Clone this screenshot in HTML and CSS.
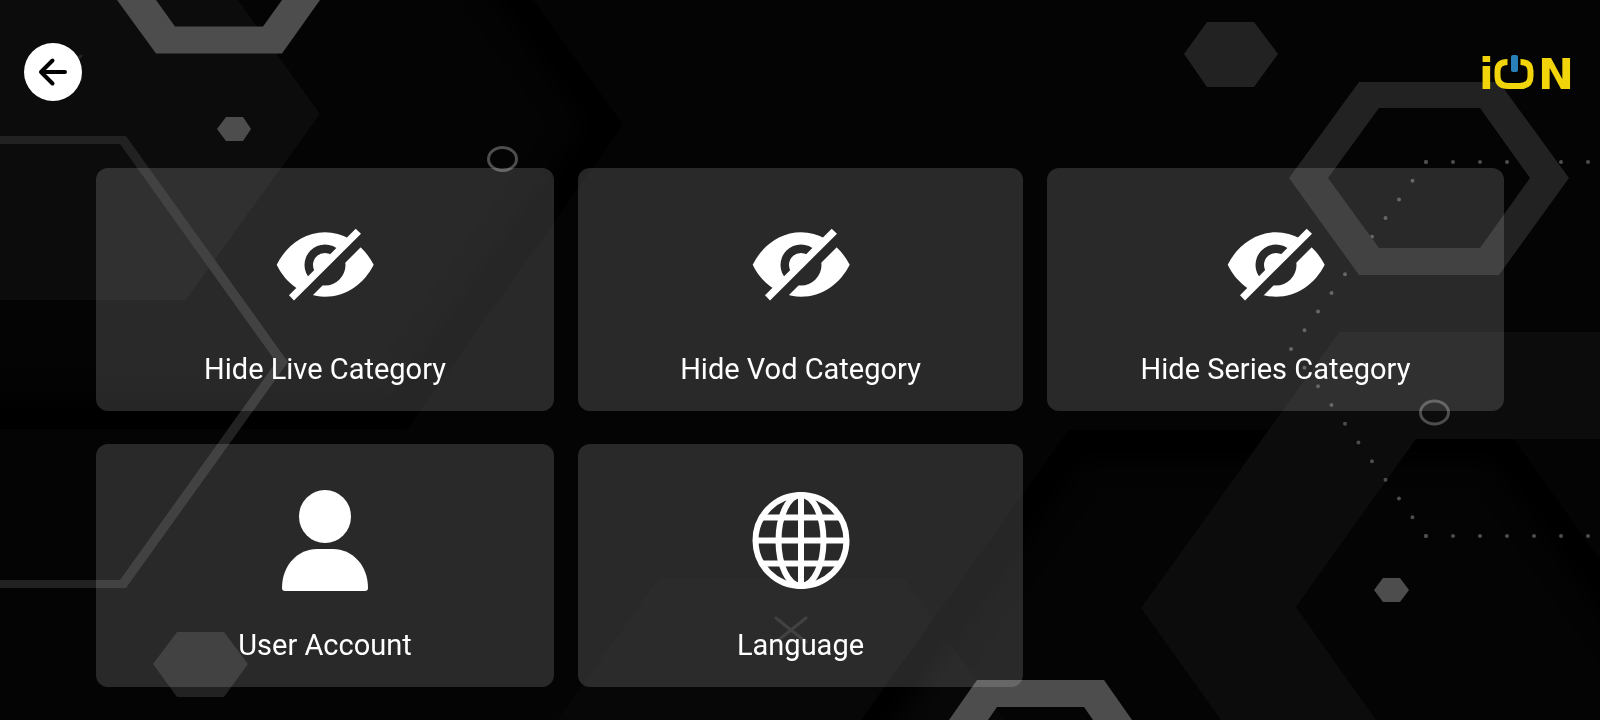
FILE: index.html
```html
<!DOCTYPE html>
<html lang="en">
<head>
    <meta charset="UTF-8">
    <meta name="viewport" content="width=device-width, initial-scale=1.0">
    <title>iON - Settings</title>
    <link rel="stylesheet" href="styles.css">
</head>
<body>
    <!-- Background -->
    <svg class="background" viewBox="0 0 1600 720" preserveAspectRatio="none" aria-hidden="true">
        <defs>
            <filter id="soft" x="-20%" y="-20%" width="140%" height="140%">
                <feGaussianBlur stdDeviation="12"/>
            </filter>
            <clipPath id="shade-left"><path d="M-60 -60H490L623 125L407 429H-60z"/></clipPath>
            <clipPath id="shade-right"><path d="M1069 430H1507L1720 728L1640 840H775z"/></clipPath>
        </defs>
        <path fill="#070707" d="M659 578H904L1005 720H557z"/>
        <g clip-path="url(#shade-left)">
            <path class="shade" d="M-60 -60H490L623 125L407 429H-60"/>
        </g>
        <g clip-path="url(#shade-right)">
            <path class="shade" d="M775 840L1069 430H1507L1720 728"/>
        </g>
        <path fill="#0c0c0c" d="M0 0H238L320 114L186 300H0z"/>
        <path fill="#0c0c0c" d="M1339 332H1600V439H1416L1296 607L1376 720H1221L1141 608z"/>
        <path class="dots-row" d="M1426 162H1600M1426 536H1600"/>
        <path class="dots-side" d="M1426 162L1291 349L1426 536"/>
        <g fill="#222" fill-rule="evenodd">
            <path d="M0 136H126L288 362L126 588H0V580H120L276 362L120 144H0z"/>
            <path d="M1184 54L1207 22H1254L1278 54L1254 87H1207z"/>
            <path d="M1289 178L1359 82H1499L1569 178L1499 275H1359zM1328 178L1379 248H1480L1530 178L1480 108H1379z"/>
            <path d="M153 664L177 632H224L248 664L224 697H177z"/>
        </g>
        <g fill="#4d4d4d">
            <path d="M117 0L156 53.500H282L320 0H282L263 26.500H175L156 0z"/>
            <path d="M217 129L226 117H243L251 129L243 141H226z"/>
            <path d="M1374 590L1383 578H1400L1409 590L1400 602H1383z"/>
            <path d="M949 720L977 680H1104L1132 720H1093L1084 707H997L988 720z"/>
        </g>
        <g fill="none" stroke="#4d4d4d" stroke-width="3">
            <ellipse cx="502.500" cy="159" rx="14" ry="11.500"/>
            <ellipse cx="1434.500" cy="412.500" rx="14" ry="11.500"/>
        </g>
        <path class="cross" d="M776 618L806 642M806 618L776 642M51 56L81 80M81 56L51 80"/>
    </svg>

    <!-- Icons -->
    <svg class="sprite" aria-hidden="true">
        <defs>
            <clipPath id="eye-upper"><path d="M0 0H97L0 97z"/></clipPath>
            <clipPath id="eye-lower"><path d="M120 0V120H0z"/></clipPath>
        </defs>
        <symbol id="icon-hide" viewBox="0 0 102 102">
            <path clip-path="url(#eye-upper)" fill-rule="evenodd" d="M2.700 50.700C12 32 30 18.300 51 18.300S90 32 99.700 50.700C90 70 72 82.700 51 82.700S12 70 2.700 50.700zM30.500 51a20.500 20.500 0 1 0 41 0a20.500 20.500 0 1 0 -41 0zM39 51a12 12 0 1 1 24 0a12 12 0 1 1 -24 0z"/>
            <path clip-path="url(#eye-lower)" fill-rule="evenodd" d="M2.700 50.700C12 32 30 18.300 51 18.300S90 32 99.700 50.700C90 70 72 82.700 51 82.700S12 70 2.700 50.700zM30.500 51a20.500 20.500 0 1 0 41 0a20.500 20.500 0 1 0 -41 0z"/>
            <path d="M81.700 14.700L87 19.700L20 86.500L15 81.300z"/>
        </symbol>
        <symbol id="icon-user" viewBox="0 0 102 102">
            <ellipse cx="51" cy="26.500" rx="26" ry="26.500"/>
            <path d="M8 98C8 75 24 59 43 59H59C78 59 94 75 94 98Q94 101 91 101H11Q8 101 8 98z"/>
        </symbol>
        <symbol id="icon-globe" viewBox="0 0 102 102">
            <g fill="none" stroke="#fff" stroke-width="6">
                <circle cx="51" cy="50.500" r="45.500"/>
                <ellipse cx="51" cy="50.500" rx="22.500" ry="45.500"/>
                <path d="M51 5V96M5 50.500H97M11 27.500H91M11 73.500H91"/>
            </g>
        </symbol>
    </svg>

    <header class="header">
        <button class="btn-back" type="button" aria-label="Back">
            <svg viewBox="0 0 58 58" aria-hidden="true">
                <path d="M41 29H17M28.500 17.500L17 29L28.500 40.500"/>
            </svg>
        </button>
        <svg class="logo" viewBox="0 0 92 36" role="img" aria-label="iON">
            <text x="-3" y="35">i</text>
            <path class="logo-ring" d="M25.500 8Q15.500 8 15.500 17V22Q15.500 32 26 32H38Q48.500 32 48.500 22V17Q48.500 8 38.500 8"/>
            <rect class="logo-power" x="29" y="1" width="7" height="17" rx="2"/>
            <text x="56" y="35">N</text>
        </svg>
    </header>

    <main class="menu">
        <button class="card" type="button">
            <svg class="card-icon" aria-hidden="true"><use href="#icon-hide"/></svg>
            <span>Hide Live Category</span>
        </button>
        <button class="card" type="button">
            <svg class="card-icon" aria-hidden="true"><use href="#icon-hide"/></svg>
            <span>Hide Vod Category</span>
        </button>
        <button class="card" type="button">
            <svg class="card-icon" aria-hidden="true"><use href="#icon-hide"/></svg>
            <span>Hide Series Category</span>
        </button>
        <button class="card" type="button">
            <svg class="card-icon" aria-hidden="true"><use href="#icon-user"/></svg>
            <span>User Account</span>
        </button>
        <button class="card" type="button">
            <svg class="card-icon" aria-hidden="true"><use href="#icon-globe"/></svg>
            <span>Language</span>
        </button>
    </main>
</body>
</html>
```

FILE: styles.css
```css
* {
    box-sizing: border-box;
}
body {
    font-family: Roboto, sans-serif;
    margin: 0;
    background-color: #040404;
    color: white;
}

/* Background */
.background {
    position: fixed;
    top: 0;
    left: 0;
    width: 100%;
    height: 100%;
    z-index: -1;
}
.shade {
    fill: none;
    stroke: black;
    stroke-width: 60px;
    filter: url(#soft);
}
.dots-row,
.dots-side {
    fill: none;
    stroke: #4d4d4d;
    stroke-width: 4px;
    stroke-linecap: round;
}
.dots-row {
    stroke-dasharray: 0 27;
}
.dots-side {
    stroke-dasharray: 0 23.06;
}
.cross {
    fill: none;
    stroke: #222;
    stroke-width: 3px;
    stroke-linecap: round;
}
.sprite {
    position: absolute;
    width: 0;
    height: 0;
}

/* Header */
.header {
    display: flex;
    justify-content: space-between;
    align-items: center;
    padding: 43px 26px 0 24px;
}
.btn-back {
    width: 58px;
    height: 58px;
    padding: 0;
    border: none;
    border-radius: 50%;
    background-color: white;
    cursor: pointer;
}
.btn-back svg {
    display: block;
    fill: none;
    stroke: black;
    stroke-width: 4px;
    stroke-linecap: round;
    stroke-linejoin: round;
}
.logo {
    width: 92px;
    height: 36px;
    overflow: visible;
}
.logo text {
    font-family: "DejaVu Sans", sans-serif;
    font-size: 43px;
    font-weight: bold;
    fill: #f2d40a;
}
.logo-ring {
    fill: none;
    stroke: #f2d40a;
    stroke-width: 6px;
}
.logo-power {
    fill: #2980b9;
}

/* Menu */
.menu {
    display: grid;
    grid-template-columns: 458fr 445fr 457fr;
    gap: 33px 24px;
    padding: 67px 6% 32px;
}
.card {
    display: flex;
    flex-direction: column;
    align-items: center;
    gap: 35px;
    padding: 46px 16px 24px;
    border: none;
    border-radius: 12px;
    background-color: rgba(255, 255, 255, 0.15);
    color: white;
    font-family: inherit;
    font-size: 29px;
    line-height: 36px;
    cursor: pointer;
}
.card:hover {
    background-color: rgba(255, 255, 255, 0.25);
}
.card-icon {
    width: 102px;
    height: 102px;
    fill: white;
}
```
